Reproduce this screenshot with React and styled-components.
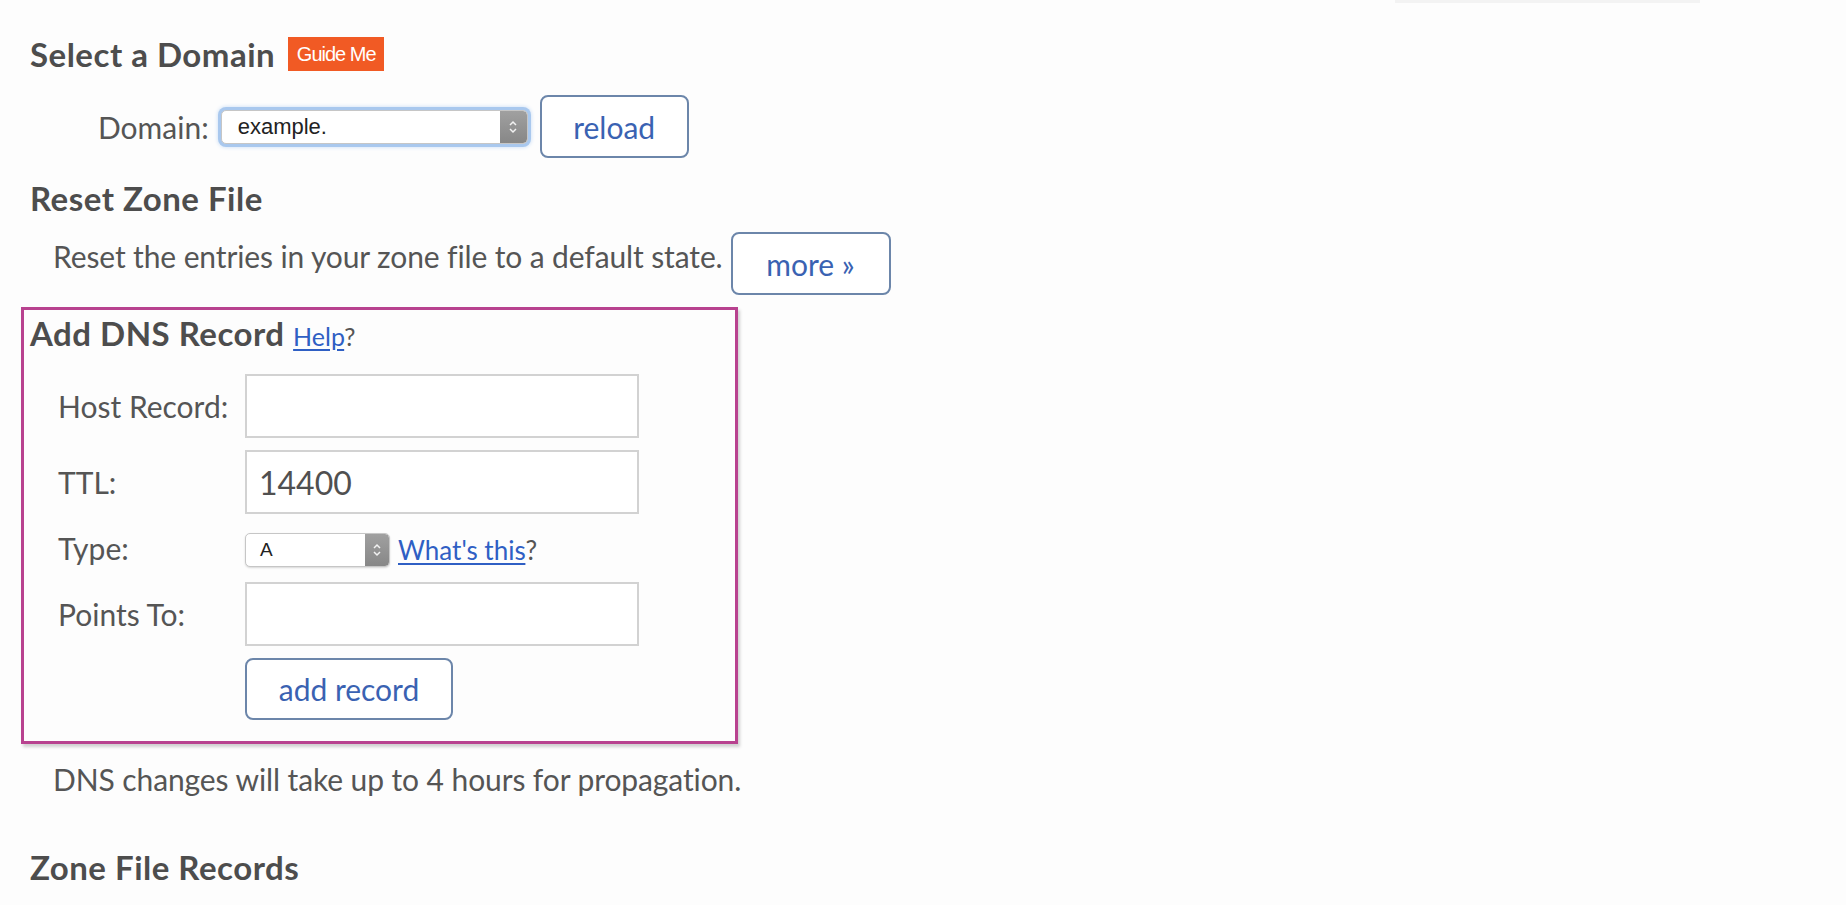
import React from "react";
import styled, { createGlobalStyle } from "styled-components";

const GlobalStyle = createGlobalStyle`
    html, body {
        margin: 0;
        padding: 0;
        background: #fdfdfd;
    }
    body {
        font-family: Lato, "Open Sans", "Liberation Sans", sans-serif;
        color: #505050;
    }
`;

const Page = styled.div`
    width: 1846px;
    height: 905px;
    overflow: hidden;
    padding-left: 30px;
    box-sizing: border-box;
`;

const TopRule = styled.div`
    height: 3px;
    width: 305px;
    margin-left: 1365px;
    background: #f3f3f3;
`;

const Heading = styled.h2`
    display: flex;
    align-items: center;
    gap: 13px;
    height: 40px;
    margin: ${p => p.$top || 0}px 0 0 0;
    font-size: 33px;
    line-height: 40px;
    font-weight: 700;
    color: #4d4d4d;
    letter-spacing: 0.5px;
`;

const Badge = styled.span`
    display: inline-flex;
    align-items: center;
    justify-content: center;
    width: 96px;
    height: 34px;
    background: #f15a24;
    color: #fff;
    font-family: "Liberation Sans Narrow", "Liberation Sans", sans-serif;
    font-size: 20px;
    font-weight: 400;
    letter-spacing: -1px;
`;

const Row = styled.div`
    display: flex;
    align-items: center;
    gap: ${p => p.$gap || 10}px;
    padding-left: ${p => p.$indent || 0}px;
    margin-top: ${p => p.$top || 0}px;
`;

const Text = styled.span`
    font-size: 30px;
    color: #555;
    letter-spacing: ${p => p.$track || 0}px;
    margin-bottom: ${p => p.$lift || 0}px;
`;

const Button = styled.button`
    height: ${p => p.$h || 63}px;
    width: ${p => p.$w}px;
    flex-shrink: 0;
    background: #fff;
    border: 2px solid #6c86aa;
    border-radius: 8px;
    color: #3a62b2;
    font-family: Lato, "Open Sans", sans-serif;
    font-size: 30px;
    padding: 0;
    cursor: pointer;
`;

const SelectBox = styled.div`
    display: flex;
    align-items: stretch;
    width: ${p => p.$w}px;
    height: ${p => p.$h}px;
    flex-shrink: 0;
    box-sizing: border-box;
    border: 1px solid #c6c6c6;
    border-radius: 5px;
    background: #fff;
    box-shadow: ${p =>
        p.$focus
            ? "0 0 0 3px #a9c8ee, 0 0 4px 3px #c5dbf5"
            : "0 1px 2px rgba(0,0,0,0.15)"};
    overflow: hidden;
`;

const SelectValue = styled.span`
    flex: 1;
    display: flex;
    align-items: center;
    padding-left: ${p => p.$pad}px;
    font-family: "Liberation Sans", Arial, sans-serif;
    font-size: ${p => p.$size}px;
    color: #222;
`;

const Stepper = styled.span`
    width: ${p => p.$w}px;
    display: flex;
    align-items: center;
    justify-content: center;
    background: linear-gradient(#a0a0a0, #878787);
    border-radius: 0 4px 4px 0;
`;

const DnsBox = styled.div`
    margin: 12px 0 0 -9px;
    width: 717px;
    box-sizing: border-box;
    border: 3px solid #b8428f;
    box-shadow: 2px 3px 3px rgba(0, 0, 0, 0.18);
    padding: 4px 0 21px 6px;
`;

const FormGrid = styled.div`
    display: grid;
    grid-template-columns: 187px 394px;
    row-gap: 12px;
    align-items: center;
    margin-top: 20px;
    padding-left: 28px;
`;

const Label = styled.label`
    font-size: 30px;
    color: #555;
`;

const Input = styled.input`
    width: 394px;
    height: 64px;
    box-sizing: border-box;
    border: 2px solid #d2d2d2;
    background: #fff;
    padding: 0 12px;
    font-family: Lato, "Open Sans", sans-serif;
    font-size: 32px;
    color: #505050;
    outline: none;
`;

const TypeCell = styled.div`
    display: flex;
    align-items: center;
    gap: 8px;
    margin: 7px 0 3px;
`;

const Link = styled.a`
    color: #2f5fc4;
    text-decoration: underline;
    text-underline-offset: 3px;
    font-size: ${p => p.$size}px;
    font-weight: 400;
    letter-spacing: 0;
`;

const Q = styled.span`
    color: #555;
    font-weight: 400;
    font-size: ${p => p.$size}px;
    letter-spacing: 0;
`;

const Note = styled.p`
    margin: 17px 0 0 23px;
    font-size: 30px;
    line-height: 36px;
    letter-spacing: -0.1px;
    color: #555;
`;

function StepperIcon() {
    return (
        <svg width="10" height="18" viewBox="0 0 10 18">
            <path d="M2 7 L5 4 L8 7" fill="none" stroke="#f2f2f2" strokeWidth="1.5" />
            <path d="M2 11 L5 14 L8 11" fill="none" stroke="#f2f2f2" strokeWidth="1.5" />
        </svg>
    );
}

function Select({ value, w, h, focus, size, pad, step }) {
    return (
        <SelectBox $w={w} $h={h} $focus={focus}>
            <SelectValue $size={size} $pad={pad}>{value}</SelectValue>
            <Stepper $w={step}>
                <StepperIcon />
            </Stepper>
        </SelectBox>
    );
}

export default function App() {
    return (
        <Page>
            <GlobalStyle />
            <TopRule />
            <Heading $top={31}>
                Select a Domain <Badge>Guide Me</Badge>
            </Heading>
            <Row $indent={68} $gap={12} $top={21}>
                <Text>Domain:</Text>
                <Select value="example." w={307} h={34} focus size={22} pad={16} step={27} />
                <Button $w={149}>reload</Button>
            </Row>
            <Heading $top={20}>Reset Zone File</Heading>
            <Row $indent={23} $gap={8} $top={14}>
                <Text $lift={16} $track={-0.12}>
                    Reset the entries in your zone file to a default state.
                </Text>
                <Button $w={160}>more »</Button>
            </Row>
            <DnsBox>
                <Heading>
                    <span>
                        Add DNS Record <Link $size={25} href="#">Help</Link>
                        <Q $size={25}>?</Q>
                    </span>
                </Heading>
                <FormGrid>
                    <Label>Host Record:</Label>
                    <Input />
                    <Label>TTL:</Label>
                    <Input defaultValue="14400" />
                    <Label>Type:</Label>
                    <TypeCell>
                        <Select value="A" w={145} h={34} size={19} pad={14} step={24} />
                        <span>
                            <Link $size={26} href="#">What's this</Link>
                            <Q $size={26}>?</Q>
                        </span>
                    </TypeCell>
                    <Label>Points To:</Label>
                    <Input />
                    <span />
                    <Button $w={208} $h={62}>add record</Button>
                </FormGrid>
            </DnsBox>
            <Note>DNS changes will take up to 4 hours for propagation.</Note>
            <Heading $top={50}>Zone File Records</Heading>
        </Page>
    );
}
